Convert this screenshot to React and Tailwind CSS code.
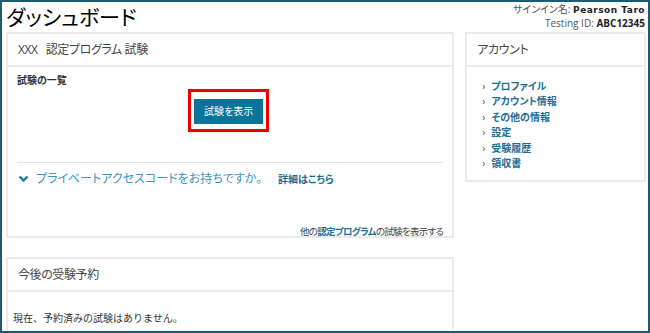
import React from "react";

const jp = { fontFamily: '"Open Sans", "Noto Sans CJK JP", sans-serif' };

const accountLinks = ["プロファイル", "アカウント情報", "その他の情報", "設定", "受験履歴", "領収書"];

const Card = ({ title, children, className = "" }) => (
  <div className={`bg-white border-2 border-[#ebebeb] ${className}`}>
    <div className="h-[33px] flex items-center px-[10px] border-b-2 border-[#ebebeb] text-[12px] tracking-[-0.4px] text-[#444] leading-none">
      {title}
    </div>
    {children}
  </div>
);

const App = () => {
  return (
    <div
      className="w-[650px] h-[333px] border-2 border-[#1d5b70] bg-white overflow-hidden flex flex-col [font-feature-settings:'palt']"
      style={jp}
    >
      <div className="h-[30px] flex justify-between pl-[4px] pr-[3px] shrink-0">
        <h1 className="text-[21px] leading-none pt-[5px] text-black">ダッシュボード</h1>
        <div className="text-right text-[10px] leading-[13px] text-[#555] pt-[1px]">
          <div>
            サインイン名: <span className="font-bold text-[#222] tracking-[0.5px]" style={{ fontFamily: '"DejaVu Sans", sans-serif', fontSize: "9px" }}>Pearson Taro</span>
          </div>
          <div>
            Testing ID: <span className="font-bold text-[#222]">ABC12345</span>
          </div>
        </div>
      </div>

      <div className="flex gap-[11px] pl-[4px] pr-[2px]">
        <div className="w-[449px] flex flex-col gap-[19px]">
          <Card title={<span>XXX&nbsp;&nbsp;&nbsp;認定プログラム 試験</span>} className="h-[206px]">
            <div className="px-[9px] pt-[6px]">
              <div className="text-[10px] font-bold text-[#333] leading-[14px]">試験の一覧</div>
              <div className="flex justify-center pt-[2px] pr-[3px]">
                <div className="border-[3px] border-[#e00] px-[3px] py-[5px]">
                  <button className="bg-[#0b7599] text-white text-[10px] h-[25px] px-[10px] leading-none">
                    試験を表示
                  </button>
                </div>
              </div>
              <div className="mt-[30px] border-t border-[#e5e5e5] pt-[5px] flex items-center h-[28px]">
                <svg width="11" height="8" viewBox="0 0 11 8" className="ml-[1px] mr-[7px]">
                  <path d="M1.5 1.5 L5.5 5.5 L9.5 1.5" stroke="#1a7aa0" strokeWidth="2.4" fill="none" />
                </svg>
                <span className="text-[12px] text-[#3a94bd] leading-none">プライベートアクセスコードをお持ちですか。</span>
                <span className="ml-[16px] text-[10px] font-bold text-[#1a6f95] leading-none">詳細はこちら</span>
              </div>
              <div className="mt-[37px] text-right text-[9.5px] tracking-[-0.7px] text-[#444] leading-none">
                他の<span className="font-bold text-[#1a6f95]">認定プログラム</span>の試験を表示する
              </div>
            </div>
          </Card>
          <Card title="今後の受験予約" className="h-[120px]">
            <div className="px-[5px] pt-[21px] text-[10px] text-[#333] leading-none [font-feature-settings:normal]">
              現在、予約済みの試験はありません。
            </div>
          </Card>
        </div>

        <div className="w-[181px]">
          <Card title="アカウント" className="h-[150px]">
            <ul className="pl-[15px] pt-[11px]">
              {accountLinks.map((l) => (
                <li key={l} className="flex items-center h-[15.5px] text-[10px] font-bold text-[#1a6f95] leading-none">
                  <span className="text-[#555] font-normal mr-[6px] text-[10px]">›</span>
                  {l}
                </li>
              ))}
            </ul>
          </Card>
        </div>
      </div>
    </div>
  );
};

export default App;
